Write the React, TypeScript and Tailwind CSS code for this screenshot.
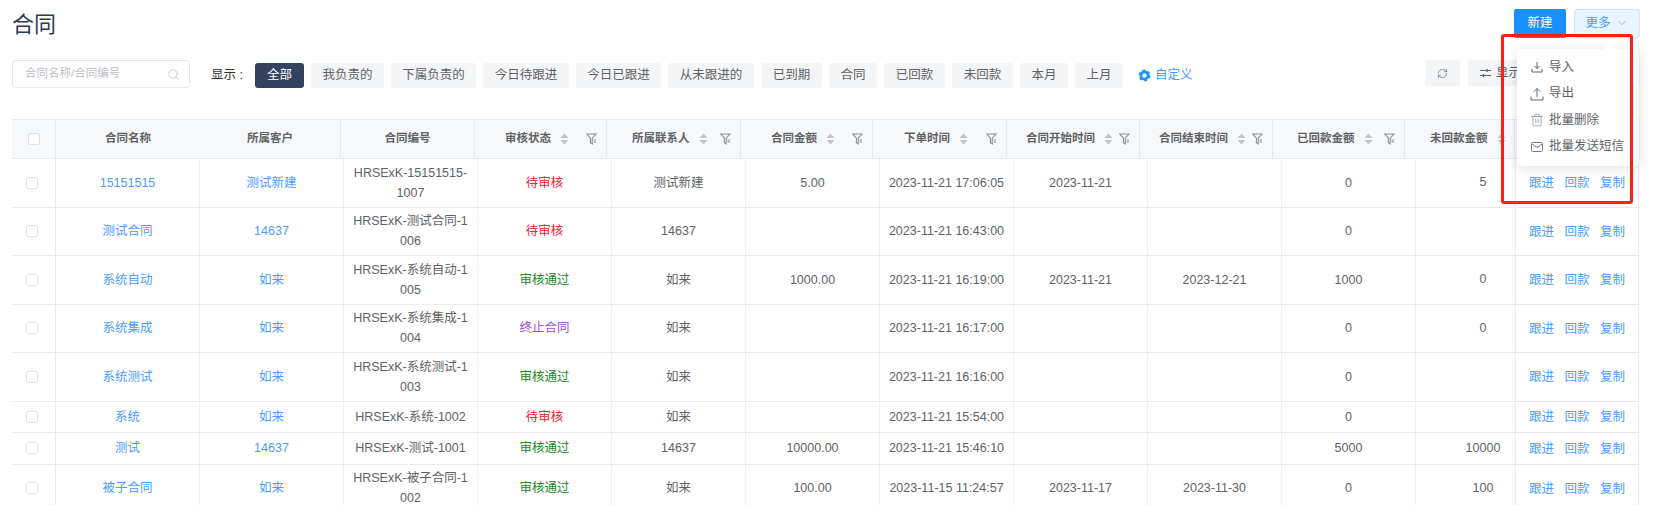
import React from "react";
import { RefreshCw, Search, ChevronDown, Trash2 } from "lucide-react";

const chips: [string, string][] = [
  ["全部", "w-[49px] bg-[#33435f] text-white"],
  ["我负责的", "w-[73px] bg-[#f4f5f7] text-[#606266]"],
  ["下属负责的", "w-[85px] bg-[#f4f5f7] text-[#606266]"],
  ["今日待跟进", "w-[86px] bg-[#f4f5f7] text-[#606266]"],
  ["今日已跟进", "w-[85px] bg-[#f4f5f7] text-[#606266]"],
  ["从未跟进的", "w-[86px] bg-[#f4f5f7] text-[#606266]"],
  ["已到期", "w-[61px] bg-[#f4f5f7] text-[#606266]"],
  ["合同", "w-[48px] bg-[#f4f5f7] text-[#606266]"],
  ["已回款", "w-[61px] bg-[#f4f5f7] text-[#606266]"],
  ["未回款", "w-[61px] bg-[#f4f5f7] text-[#606266]"],
  ["本月", "w-[48px] bg-[#f4f5f7] text-[#606266]"],
  ["上月", "w-[48px] bg-[#f4f5f7] text-[#606266]"],
];

type Head = { t: string; w: string; pl: string; f?: string };
const heads: Head[] = [
  { t: "审核状态", w: "w-[132px]", pl: "pl-[30px]", f: "mr-[9px]" },
  { t: "所属联系人", w: "w-[134px]", pl: "pl-[25px]", f: "mr-[9px]" },
  { t: "合同金额", w: "w-[132px]", pl: "pl-[30px]", f: "mr-[9px]" },
  { t: "下单时间", w: "w-[133.5px]", pl: "pl-[31px]", f: "mr-[9px]" },
  { t: "合同开始时间", w: "w-[133.5px]", pl: "pl-[19.5px]", f: "mr-[9px]" },
  { t: "合同结束时间", w: "w-[133px]", pl: "pl-[19px]", f: "mr-[9px]" },
  { t: "已回款金额", w: "w-[132px]", pl: "pl-[24px]", f: "mr-[9px]" },
  { t: "未回款金额", w: "w-[110px]", pl: "pl-[25px]" },
];

type Row = {
  name: string; cust: string; code: string; st: string; c: string;
  contact: string; amt: string; time: string; start: string; end: string; paid: string; un: string; h: string;
};
const red = "text-[#f5222d]";
const green = "text-[#1a8a1a]";
const purple = "text-[#a04ae8]";
const tall = "h-[48.5px]";
const low = "h-[31.5px]";
const rows: Row[] = [
  { name: "15151515", cust: "测试新建", code: "HRSExK-15151515-1007", st: "待审核", c: red, contact: "测试新建", amt: "5.00", time: "2023-11-21 17:06:05", start: "2023-11-21", end: "", paid: "0", un: "5", h: tall },
  { name: "测试合同", cust: "14637", code: "HRSExK-测试合同-1006", st: "待审核", c: red, contact: "14637", amt: "", time: "2023-11-21 16:43:00", start: "", end: "", paid: "0", un: "", h: tall },
  { name: "系统自动", cust: "如来", code: "HRSExK-系统自动-1005", st: "审核通过", c: green, contact: "如来", amt: "1000.00", time: "2023-11-21 16:19:00", start: "2023-11-21", end: "2023-12-21", paid: "1000", un: "0", h: tall },
  { name: "系统集成", cust: "如来", code: "HRSExK-系统集成-1004", st: "终止合同", c: purple, contact: "如来", amt: "", time: "2023-11-21 16:17:00", start: "", end: "", paid: "0", un: "0", h: tall },
  { name: "系统测试", cust: "如来", code: "HRSExK-系统测试-1003", st: "审核通过", c: green, contact: "如来", amt: "", time: "2023-11-21 16:16:00", start: "", end: "", paid: "0", un: "", h: tall },
  { name: "系统", cust: "如来", code: "HRSExK-系统-1002", st: "待审核", c: red, contact: "如来", amt: "", time: "2023-11-21 15:54:00", start: "", end: "", paid: "0", un: "", h: low },
  { name: "测试", cust: "14637", code: "HRSExK-测试-1001", st: "审核通过", c: green, contact: "14637", amt: "10000.00", time: "2023-11-21 15:46:10", start: "", end: "", paid: "5000", un: "10000", h: low },
  { name: "被子合同", cust: "如来", code: "HRSExK-被子合同-1002", st: "审核通过", c: green, contact: "如来", amt: "100.00", time: "2023-11-15 11:24:57", start: "2023-11-17", end: "2023-11-30", paid: "0", un: "100", h: tall },
];

function SortIcon() {
  return (
    <svg width="9" height="12" viewBox="0 0 9 12" className="ml-[9px] shrink-0">
      <path d="M4.5 0.5 L8.5 5 L0.5 5 Z M4.5 11.5 L8.5 7 L0.5 7 Z" fill="#c0c4cc" />
    </svg>
  );
}

function FilterIcon({ cls }: { cls?: string }) {
  return (
    <svg width="11" height="12" viewBox="0 0 11 12" className={"ml-auto shrink-0 " + cls} fill="none" stroke="#8b8f96" strokeWidth="1.1">
      <path d="M0.8 1 H10 L6.2 5.2 V11 L4.4 9.8 V5.2 Z" />
      <path d="M7.5 7 H10 M7.5 9 H10" />
    </svg>
  );
}

function Cell({ w, children, cls = "text-[#606266]", px = "px-[4px]" }: { w: string; children?: React.ReactNode; cls?: string; px?: string }) {
  return (
    <div className={`${w} ${cls} ${px} h-full shrink-0 flex items-center justify-center text-center break-all leading-[20px] border-r border-[#edf0f5]`}>
      <span>{children}</span>
    </div>
  );
}

function MenuItem({ icon, label }: { icon: React.ReactNode; label: string }) {
  return (
    <div className="h-[26.5px] flex items-center text-[12.5px] text-[#606266]">
      <span className="w-[16px] flex justify-center mr-[4px]">{icon}</span>
      {label}
    </div>
  );
}

export default function App() {
  return (
    <div
      className="relative w-[1654px] h-[505px] overflow-hidden bg-white text-[12.5px] px-[12px] pt-[8px]"
      style={{ fontFamily: '"Liberation Sans", "Noto Sans CJK SC", sans-serif' }}
    >
      {/* Title row */}
      <div className="flex items-center h-[30px] w-[1628px]">
        <h1 className="text-[22px] text-[#2c3a52] leading-[30px] pt-[4px]">合同</h1>
        <button className="ml-auto w-[52px] h-[29px] rounded-[2px] bg-[#1890ff] text-white text-[12.5px]">新建</button>
        <button className="ml-[8px] w-[66px] h-[29px] rounded-[3px] border border-[#cfe6fd] bg-[#e8f4ff] text-[#409eff] text-[12.5px] flex items-center justify-center gap-[4px]">
          更多 <ChevronDown size={14} strokeWidth={1} />
        </button>
      </div>

      {/* Filter row */}
      <div className="flex items-center mt-[22px] h-[28px] w-[1628px]">
        <div className="w-[178px] h-[28px] rounded-[4px] border border-[#e4e7ed] flex items-center pl-[12px] pr-[9px] text-[#bcc0c7] text-[11.5px]">
          合同名称/合同编号
          <Search size={13} strokeWidth={1.2} className="ml-auto text-[#b4b8bf]" />
        </div>
        <span className="ml-[21px] w-[44px] text-[#303133] text-[12.5px] mt-[3px]">显示 :</span>
        <div className="flex gap-[7px] mt-[3px]">
          {chips.map(([t, c]) => (
            <div key={t} className={`${c} h-[25px] rounded-[3px] flex items-center justify-center`}>{t}</div>
          ))}
        </div>
        <div className="ml-[15px] mt-[2px] flex items-center gap-[4px] text-[#409eff]">
          <svg width="13" height="13" viewBox="0 0 13 13" fill="none">
            <circle cx="6.5" cy="6.5" r="3.6" stroke="#1890ff" strokeWidth="2.6" />
            <circle cx="6.5" cy="6.5" r="5.3" stroke="#1890ff" strokeWidth="1.4" strokeDasharray="2.8 2.75" />
          </svg>
          自定义
        </div>
        <div className="ml-auto w-[35px] h-[26px] bg-[#f4f5f7] rounded-[3px] flex items-center justify-center text-[#606266] -mt-[2px]">
          <RefreshCw size={11} strokeWidth={1.4} />
        </div>
        <div className="ml-[8px] w-[172px] h-[26px] bg-[#f4f5f7] rounded-[3px] flex items-center pl-[12px] gap-[5px] text-[#606266] -mt-[2px]">
          <svg width="11" height="10" viewBox="0 0 11 10" fill="none" stroke="#606266" strokeWidth="1">
            <path d="M0 2.5 H11 M0 7.5 H11" />
            <path d="M7 1 V4 M3.5 6 V9" strokeWidth="1.4" />
          </svg>
          显示
        </div>
      </div>

      {/* Table */}
      <div className="mt-[31px] w-[1628px] text-[12.5px]">
        <div className="flex h-[40px] bg-[#f7f8f9] border-y border-[#e6eaf0] text-[11.5px] font-semibold text-[#5f6368]">
          <div className="w-[44px] shrink-0 flex items-center pl-[16px] border-r border-[#e6eaf0]">
            <span className="w-[12px] h-[12px] bg-white border border-[#dcdfe6] rounded-[2px]" />
          </div>
          <div className="w-[285px] shrink-0 flex items-center border-r border-[#e6eaf0]">
            <span className="w-[144px] text-center">合同名称</span>
            <span className="w-[140px] text-center">所属客户</span>
          </div>
          <div className="w-[134px] shrink-0 flex items-center justify-center border-r border-[#e6eaf0]">合同编号</div>
          {heads.map((h) => (
            <div key={h.t} className={`${h.w} ${h.pl} shrink-0 flex items-center border-r border-[#e6eaf0]`}>
              <span className="whitespace-nowrap">{h.t}</span>
              <SortIcon />
              {h.f && <FilterIcon cls={h.f} />}
            </div>
          ))}
          <div className="flex-1" />
        </div>

        {rows.map((r) => (
          <div key={r.code} className={`flex ${r.h} border-b border-[#e9edf3]`}>
            <div className="w-[44px] shrink-0 flex items-center pl-[14px] border-r border-[#e6eaf0]">
              <span className="w-[12px] h-[12px] border border-[#e0e3e9] rounded-[2px]" />
            </div>
            <Cell w="w-[144px]" cls="text-[#4b9cff]">{r.name}</Cell>
            <Cell w="w-[144px]" cls="text-[#4b9cff]">{r.cust}</Cell>
            <Cell w="w-[134px]" px="px-[9px]">{r.code}</Cell>
            <Cell w="w-[134px]" cls={r.c}>{r.st}</Cell>
            <Cell w="w-[134px]">{r.contact}</Cell>
            <Cell w="w-[134px]">{r.amt}</Cell>
            <Cell w="w-[134px]">{r.time}</Cell>
            <Cell w="w-[134px]">{r.start}</Cell>
            <Cell w="w-[134px]">{r.end}</Cell>
            <Cell w="w-[134px]">{r.paid}</Cell>
            {/* This column runs on beneath the fixed operations column */}
            <div className="w-[99px] shrink-0 h-full overflow-hidden">
              <div className="w-[134px] h-full flex items-center justify-center text-[#606266]">{r.un}</div>
            </div>
            <div className="w-[124px] shrink-0 flex items-center pl-[13px] pt-[2px] gap-[10.5px] text-[#4b9cff] border-l border-r border-[#e9edf3] shadow-[-2px_0_3px_rgba(0,0,0,0.03)]">
              <span>跟进</span>
              <span>回款</span>
              <span>复制</span>
            </div>
          </div>
        ))}
      </div>

      {/* Dropdown popover */}
      <div className="absolute left-[1517px] top-[49px] w-[122px] h-[117px] bg-white rounded-[4px] shadow-[0_2px_12px_rgba(0,0,0,0.12)] pl-[12px] pt-[5px]">
        <span className="absolute -top-[4px] left-[88px] w-[8px] h-[8px] bg-white rotate-45" />
        <MenuItem
          label="导入"
          icon={
            <svg width="12" height="12" viewBox="0 0 12 12" fill="none" stroke="#606266" strokeWidth="1">
              <path d="M6 1 V7.5 M3.5 5 L6 7.5 L8.5 5 M1 8 V11 H11 V8" />
            </svg>
          }
        />
        <MenuItem
          label="导出"
          icon={
            <svg width="14" height="14" viewBox="0 0 14 14" fill="none" stroke="#606266" strokeWidth="1">
              <path d="M7 10 V1.5 M4 4.5 L7 1.5 L10 4.5 M1 9.5 V13 H13 V9.5" />
            </svg>
          }
        />
        <MenuItem label="批量删除" icon={<Trash2 size={14} strokeWidth={1.1} className="text-[#777a80]" />} />
        <MenuItem
          label="批量发送短信"
          icon={
            <svg width="12" height="10" viewBox="0 0 12 10" fill="none" stroke="#777a80" strokeWidth="1">
              <rect x="0.5" y="0.5" width="11" height="9" rx="1" />
              <path d="M1 2 L6 5.5 L11 2" />
            </svg>
          }
        />
      </div>

      {/* Red annotation */}
      <div className="absolute left-[1501px] top-[34px] w-[132px] h-[170px] border-[3.5px] border-[#ff2012] rounded-[3px]" />
    </div>
  );
}
